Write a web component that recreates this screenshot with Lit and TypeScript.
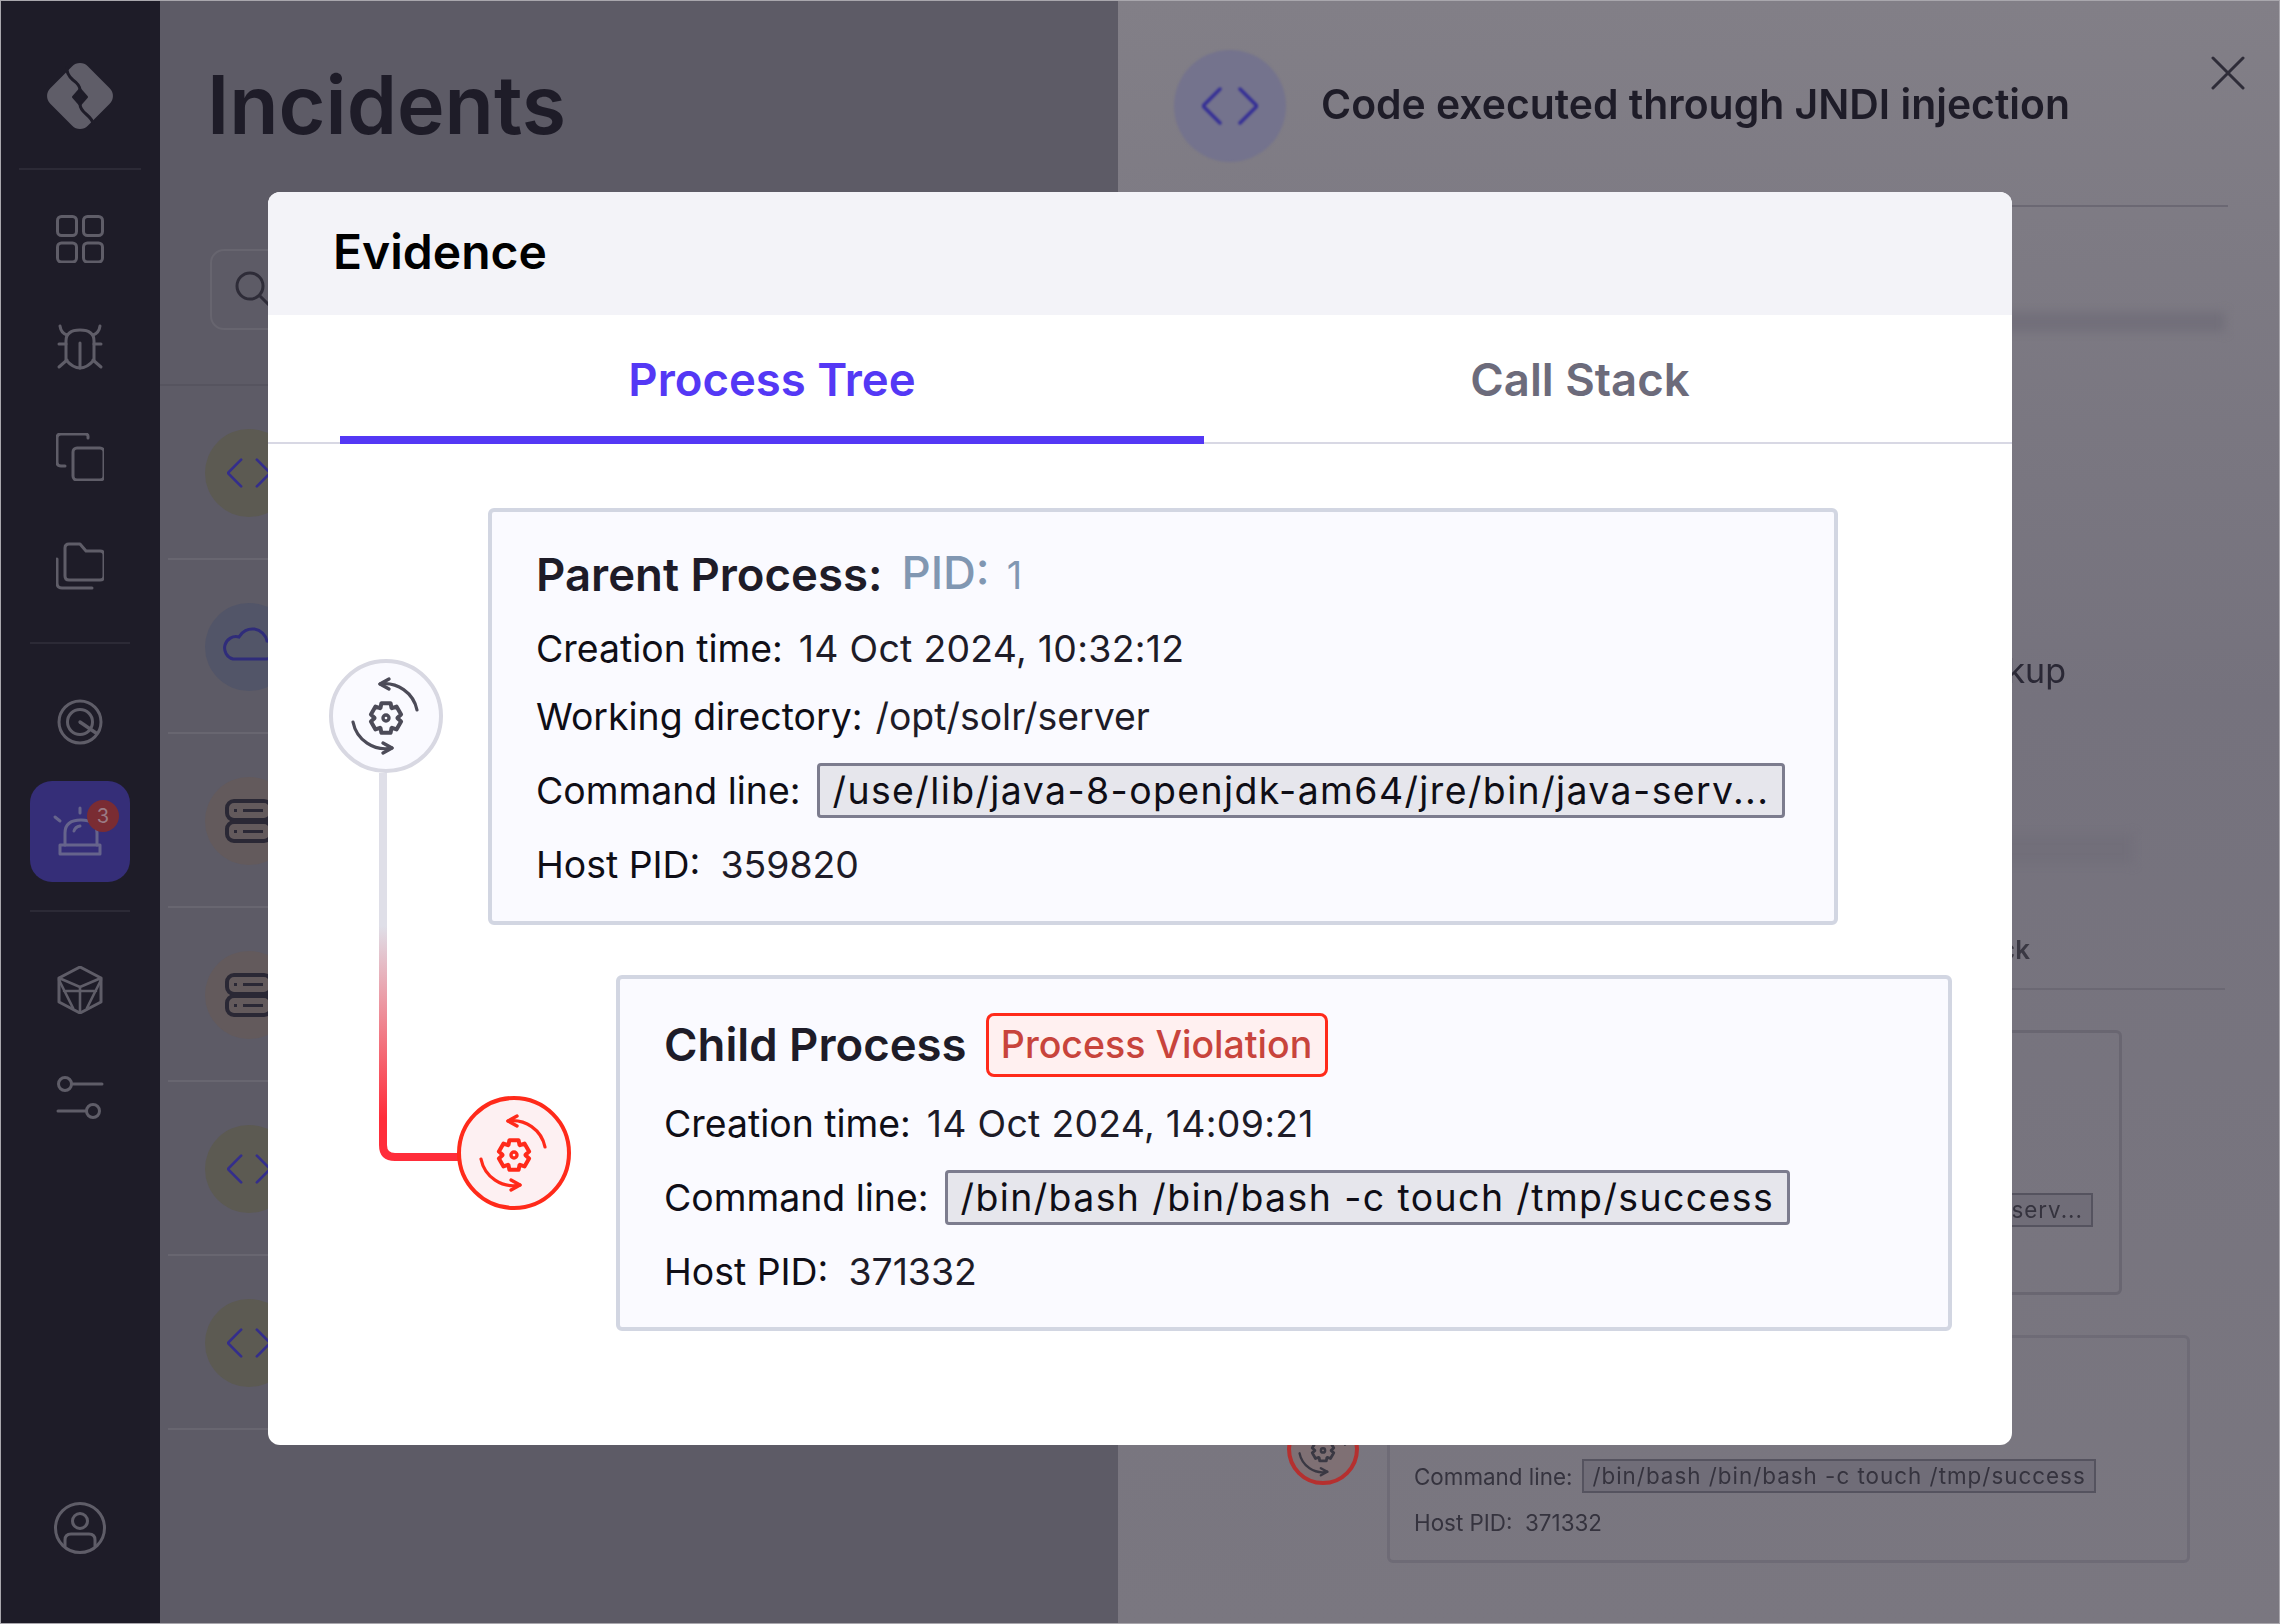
import { LitElement, html, svg, css } from "lit";
import { customElement } from "lit/decorators.js";

// six toothed gear outline, centred on 0,0
function gearPath(r: number, inner: number) {
  let d = "";
  for (let i = 0; i < 6; i++) {
    const a = (i * Math.PI) / 3 - Math.PI / 2;
    const pts = [
      [a - 0.3, r],
      [a + 0.3, r],
      [a + 0.5, inner],
      [a + Math.PI / 3 - 0.5, inner],
    ];
    for (const [t, q] of pts) {
      d += `${d ? "L" : "M"}${(Math.cos(t) * q).toFixed(1)} ${(Math.sin(t) * q).toFixed(1)}`;
    }
  }
  return d + "Z";
}

const processIcon = (size: number) => html`
  <svg width=${size} height=${size} viewBox="-45 -45 90 90" fill="none" stroke="currentColor" stroke-width="3.2" stroke-linecap="round" stroke-linejoin="round">
    <path d="M-6 -32 A33 33 0 0 1 31 -6"></path>
    <path d="M-6 -32 L3 -37 M-6 -32 L3 -27" stroke-width="3.4"></path>
    <path d="M-33 6 A33 33 0 0 0 6 32"></path>
    <path d="M6 32 L-3 37 M6 32 L-3 27" stroke-width="3.4"></path>
    <path d=${gearPath(15.5, 11.5)} transform="translate(0 2)" stroke-width="4"></path>
    <circle cx="0" cy="2" r="3" stroke-width="3.4"></circle>
  </svg>
`;

const codeIcon = (size: number) => html`
  <svg width=${size} height=${size} viewBox="0 0 56 56" fill="none" stroke="currentColor" stroke-width="3.4" stroke-linecap="round" stroke-linejoin="round">
    <path d="M18 11 L1 28 L18 45"></path>
    <path d="M38 11 L55 28 L38 45"></path>
  </svg>
`;

const serverIcon = html`
  <svg width="60" height="60" viewBox="0 0 60 60" fill="none" stroke="currentColor" stroke-width="4">
    <rect x="8" y="10" width="44" height="19" rx="7"></rect>
    <rect x="8" y="31" width="44" height="19" rx="7"></rect>
    <path d="M24 19.5H44M24 40.5H44M15 19.5H18M15 40.5H18" stroke-width="3"></path>
  </svg>
`;

const cloudIcon = html`
  <svg width="60" height="60" viewBox="0 0 60 60" fill="none" stroke="currentColor" stroke-width="3">
    <path d="M14 42 H46 A9 9 0 0 0 48 24 A15 15 0 0 0 20 20 A11 11 0 0 0 14 42Z"></path>
  </svg>
`;

const NAV_TOP = [
  svg`<rect x="1.5" y="1.5" width="19" height="19" rx="4"></rect><rect x="27.5" y="1.5" width="19" height="19" rx="4"></rect><rect x="1.5" y="28" width="19" height="19" rx="4"></rect><rect x="27.5" y="28" width="19" height="19" rx="4"></rect>`,
  svg`<path d="M10 17 Q10 6 24 6 Q38 6 38 17 V36 Q31 44 24 44 Q17 44 10 36Z"></path><path d="M24 19V44M3 20H10M38 20H45M4 2 Q5 9 11 11M44 2 Q43 9 37 11M3 43 L11 36M45 43 L37 36"></path>`,
  svg`<path d="M32 5 V3 Q32 1 29 1 H5 Q1 1 1 5 V29 Q1 33 5 33 H9"></path><rect x="17" y="15" width="31" height="32" rx="4"></rect>`,
  svg`<path d="M9 6 Q9 2 13 2 H24 L30 9 H44 Q48 9 48 13 V34 Q48 38 44 38 H13 Q9 38 9 34Z"></path><path d="M1 17 V41 Q1 46 6 46 H36"></path>`,
];

const NAV_BOTTOM = [
  svg`<path d="M3 12 L24 1 L45 12 V36 L24 47 L3 36Z"></path><path d="M3 12 L24 21 L45 12M24 21 V47M3 14 L17 42M45 14 L31 42M8 25 H40" stroke-width="2.6"></path>`,
  svg`<circle cx="9" cy="10" r="6.5"></circle><circle cx="37" cy="37" r="6.5"></circle><path d="M15.5 10 H46M2 37 H30.5"></path>`,
];

@customElement("side-bar")
export class SideBar extends LitElement {
  static styles = css`
    :host {
      display: flex;
      flex-direction: column;
      align-items: center;
      width: 160px;
      flex: none;
      padding: 60px 0 70px;
      box-sizing: border-box;
      background: #1e1c28;
      color: #5f5d68;
    }
    .rule {
      height: 2px;
      background: #2c2a36;
    }
    .rule.wide {
      width: 122px;
      margin-top: 36px;
    }
    .rule.mid {
      width: 100px;
      margin-top: 52px;
    }
    .rule.low {
      width: 100px;
      margin-top: 28px;
    }
    .group {
      display: flex;
      flex-direction: column;
      gap: 61px;
      margin-top: 45px;
    }
    .group.bottom {
      margin-top: 54px;
      gap: 60px;
    }
    svg.nav {
      display: block;
      fill: none;
      stroke: currentColor;
      stroke-width: 3;
      stroke-linecap: round;
      stroke-linejoin: round;
    }
    .target {
      margin-top: 54px;
    }
    .active {
      position: relative;
      display: flex;
      align-items: center;
      justify-content: center;
      width: 100px;
      height: 101px;
      margin-top: 35px;
      border-radius: 22px;
      background: #352e78;
      color: #66648c;
    }
    .badge {
      position: absolute;
      left: 57px;
      top: 19px;
      width: 32px;
      height: 32px;
      border-radius: 50%;
      background: #7a2c33;
      color: #9a7b85;
      font: 400 20px/32px Inter, sans-serif;
      text-align: center;
    }
    .user {
      margin-top: auto;
    }
  `;

  render() {
    return html`
      <svg width="68" height="72" viewBox="0 0 68 72">
        <rect x="7.5" y="9.5" width="53" height="53" rx="11" fill="#5f5d68" transform="rotate(45 34 36)"></rect>
        <path d="M21 7 Q20 14 27 20 Q34 25 34 30 M34 44 Q34 49 40 54 Q47 60 47 64" fill="none" stroke="#1e1c28" stroke-width="3"></path>
        <path d="M34 29 L41 37 L34 45 L27 37Z" fill="#1e1c28" stroke="#1e1c28" stroke-width="2" stroke-linejoin="round"></path>
      </svg>
      <div class="rule wide"></div>
      <div class="group">
        ${NAV_TOP.map((p) => html`<svg class="nav" width="48" height="48" viewBox="0 0 48 48">${p}</svg>`)}
      </div>
      <div class="rule mid"></div>
      <svg class="nav target" width="48" height="48" viewBox="0 0 48 48">
        <circle cx="24" cy="24" r="21"></circle>
        <circle cx="24" cy="24" r="12.5"></circle>
        <path d="M24 24 L40 35" stroke-width="3.4"></path>
      </svg>
      <div class="active">
        <svg class="nav" width="56" height="56" viewBox="0 0 56 56">
          <path d="M13 41 V29 Q13 16 29 16 Q45 16 45 29 V41"></path>
          <path d="M8 50 V41 H48 V50Z"></path>
          <path d="M22 27 Q23 23 28 22M28 4V9M3 13 L8 17"></path>
        </svg>
        <span class="badge">3</span>
      </div>
      <div class="rule low"></div>
      <div class="group bottom">
        ${NAV_BOTTOM.map((p) => html`<svg class="nav" width="48" height="48" viewBox="0 0 48 48">${p}</svg>`)}
      </div>
      <svg class="nav user" width="52" height="52" viewBox="0 0 52 52">
        <circle cx="26" cy="26" r="24.5"></circle>
        <circle cx="26" cy="19" r="7.5"></circle>
        <path d="M11 44 V38 Q11 32 17 32 H35 Q41 32 41 38 V44"></path>
      </svg>
    `;
  }
}

@customElement("incident-list")
export class IncidentList extends LitElement {
  static styles = css`
    :host {
      display: block;
      width: 958px;
      flex: none;
      background: #5d5b66;
      font-family: Inter, sans-serif;
      filter: blur(0.7px);
    }
    .top {
      height: 386px;
      box-sizing: border-box;
      padding: 50px 0 0 47px;
      border-bottom: 2px solid #56545f;
    }
    h1 {
      margin: 0;
      font-size: 80.6px;
      line-height: 110px;
      font-weight: 600;
      color: #1e1c28;
    }
    .search {
      display: flex;
      align-items: center;
      width: 500px;
      height: 81px;
      margin: 89px 0 0 3px;
      padding-left: 20px;
      box-sizing: border-box;
      border: 2px solid #67656f;
      border-radius: 14px;
      color: #2e2c38;
    }
    .row {
      display: flex;
      align-items: center;
      height: 174px;
      box-sizing: border-box;
      margin-left: 8px;
      padding: 2px 0 0 37px;
      border-bottom: 2px solid #686670;
    }
    .dot {
      display: flex;
      align-items: center;
      justify-content: center;
      width: 88px;
      height: 88px;
      border-radius: 50%;
    }
    .code {
      background: #5c5a52;
      color: #342e8c;
    }
    .cloud {
      background: #525568;
      color: #2f2c7a;
    }
    .server {
      background: #635a5c;
      color: #2a2835;
    }
  `;

  render() {
    const rows: [string, unknown][] = [
      ["code", codeIcon(44)],
      ["cloud", cloudIcon],
      ["server", serverIcon],
      ["server", serverIcon],
      ["code", codeIcon(44)],
      ["code", codeIcon(44)],
    ];
    return html`
      <div class="top">
        <h1>Incidents</h1>
        <div class="search">
          <svg width="44" height="44" viewBox="0 0 44 44" fill="none" stroke="currentColor" stroke-width="3">
            <circle cx="18" cy="18" r="13"></circle>
            <path d="M28 28 L40 40"></path>
          </svg>
        </div>
      </div>
      ${rows.map(([kind, icon]) => html`<div class="row"><div class="dot ${kind}">${icon}</div></div>`)}
    `;
  }
}

@customElement("incident-detail")
export class IncidentDetail extends LitElement {
  static styles = css`
    :host {
      display: flex;
      flex-direction: column;
      flex: 1;
      min-width: 0;
      background: linear-gradient(#827f87 0, #75727d 700px, #7a7780 100%);
      font-family: Inter, sans-serif;
      color: #2a2835;
      filter: blur(0.5px);
    }
    .head {
      display: flex;
      align-items: center;
      gap: 35px;
      height: 205px;
      box-sizing: border-box;
      padding-top: 6px;
      margin: 0 52px 0 56px;
    }
    .head .dot {
      display: flex;
      align-items: center;
      justify-content: center;
      width: 112px;
      height: 112px;
      border-radius: 50%;
      background: #74738d;
      color: #342e96;
      filter: blur(1px);
    }
    .head h2 {
      margin: 0 0 4px;
      font-size: 40.9px;
      font-weight: 600;
      color: #1e1c28;
    }
    .bar {
      height: 20px;
      margin: 105px 55px 0 0;
      background: #726f7a;
      filter: blur(5px);
    }
    .bar.two {
      height: 30px;
      margin: 141px 147px 0 0;
    }
    .head-rule {
      height: 2px;
      margin: 0 52px 0 56px;
      background: #6b6873;
    }
    .line {
      margin: 317px 214px 0 0;
      font-size: 34px;
      line-height: 44px;
      text-align: right;
    }
    .tab {
      margin: 66px 250px 0 0;
      font-size: 26px;
      line-height: 40px;
      font-weight: 600;
      text-align: right;
      color: #3a3843;
    }
    .rule {
      height: 2px;
      margin: 18px 55px 0 0;
      background: #6b6873;
    }
    .card-a {
      height: 265px;
      margin: 40px 158px 0 150px;
      padding: 160px 26px 0 0;
      box-sizing: border-box;
      display: flex;
      justify-content: flex-end;
      align-items: flex-start;
      border: 3px solid #696671;
      border-radius: 6px;
    }
    .lower {
      display: flex;
      align-items: center;
      gap: 28px;
      margin: 40px 90px 0 169px;
    }
    .ring {
      flex: none;
      display: flex;
      align-items: center;
      justify-content: center;
      width: 72px;
      height: 72px;
      box-sizing: border-box;
      border: 4px solid #b5302f;
      border-radius: 50%;
      background: #7f7074;
      color: #3a3843;
    }
    .card-b {
      flex: 1;
      height: 228px;
      padding: 121px 0 0 24px;
      box-sizing: border-box;
      border: 3px solid #6e6b76;
      border-radius: 6px;
      font-size: 22.4px;
      color: #35333e;
    }
    .cmd {
      display: flex;
      align-items: center;
      gap: 10px;
    }
    .box {
      display: inline-block;
      height: 34px;
      line-height: 30px;
      padding: 0 8px;
      box-sizing: border-box;
      border: 2px solid #55535f;
      background: #706d78;
      font-size: 22.4px;
      letter-spacing: 1px;
      color: #35333e;
      white-space: nowrap;
    }
    .host {
      margin-top: 16px;
    }
  `;

  render() {
    return html`
      <div class="head">
        <div class="dot">${codeIcon(56)}</div>
        <h2>Code executed through JNDI injection</h2>
      </div>
      <div class="head-rule"></div>
      <div class="bar"></div>
      <div class="line">Backup</div>
      <div class="bar two"></div>
      <div class="tab">Call Stack</div>
      <div class="rule"></div>
      <div class="card-a"><span class="box">/java-serv...</span></div>
      <div class="lower">
        <div class="ring">${processIcon(64)}</div>
        <div class="card-b">
          <div class="cmd">Command line: <span class="box">/bin/bash /bin/bash -c touch /tmp/success</span></div>
          <div class="host">Host PID:&nbsp; 371332</div>
        </div>
      </div>
    `;
  }
}

@customElement("evidence-modal")
export class EvidenceModal extends LitElement {
  static styles = css`
    :host {
      display: block;
      width: 1744px;
      height: 1253px;
      border-radius: 12px;
      overflow: hidden;
      background: #fff;
      font-family: Inter, sans-serif;
      color: #0f0e16;
    }
    header {
      display: flex;
      align-items: center;
      height: 123px;
      box-sizing: border-box;
      padding: 0 0 4px 65px;
      background: #f3f3f8;
      font-size: 48px;
      font-weight: 600;
      color: #000;
    }
    .tabs {
      display: flex;
      height: 129px;
      box-sizing: border-box;
      padding-left: 72px;
      border-bottom: 2px solid #d8d8e4;
      font-size: 45.5px;
      font-weight: 600;
    }
    .tab {
      display: flex;
      align-items: center;
      justify-content: center;
      box-sizing: border-box;
      height: 129px;
      color: #6c6b7b;
    }
    .tab.on {
      width: 864px;
      padding-top: 8px;
      color: #5438f5;
      border-bottom: 8px solid #5438f5;
    }
    .tab.off {
      width: 752px;
    }
    .tree {
      position: relative;
      display: flex;
      flex-direction: column;
      gap: 50px;
      padding-top: 64px;
    }
    .wire {
      position: absolute;
      left: 0;
      top: 0;
    }
    .row {
      position: relative;
      display: flex;
      align-items: center;
    }
    .row.parent {
      gap: 45px;
      margin: 0 174px 0 61px;
    }
    .row.child {
      gap: 45px;
      margin: 0 60px 0 189px;
    }
    .node {
      flex: none;
      display: flex;
      align-items: center;
      justify-content: center;
      width: 114px;
      height: 114px;
      box-sizing: border-box;
      border-radius: 50%;
      border: 4px solid #d8d8e2;
      background: #fafaff;
      color: #4c4b58;
    }
    .node.bad {
      border-color: #ff2a1a;
      background: #fdf0f2;
      color: #ff2a1a;
    }
    .card {
      flex: 1;
      display: flex;
      flex-direction: column;
      gap: 25px;
      padding: 34px 48px 34.5px 44px;
      border: 4px solid #d2d6e2;
      border-radius: 6px;
      background: #fafaff;
      font-size: 37.4px;
      line-height: 43px;
    }
    .title {
      display: flex;
      align-items: center;
      gap: 19px;
      height: 64px;
      font-size: 45.5px;
      font-weight: 600;
      color: #1e1c28;
    }
    .parent .title {
      height: 56px;
    }
    .pid {
      color: #8197b2;
      font-weight: 500;
    }
    .pid span {
      font-size: 38px;
      font-weight: 400;
      margin-left: 17px;
    }
    .violation {
      display: flex;
      align-items: center;
      justify-content: center;
      width: 342px;
      height: 64px;
      box-sizing: border-box;
      border: 3px solid #ff2a1a;
      border-radius: 8px;
      background: #fff0f0;
      color: #c8443c;
      font-size: 37.5px;
      font-weight: 500;
    }
    .field {
      display: flex;
      align-items: center;
      gap: 16px;
      white-space: nowrap;
    }
    .field.tight {
      gap: 13px;
    }
    .field.wide {
      gap: 20px;
    }
    .field b {
      font-weight: 400;
      color: #1e1c28;
    }
    .field b.date {
      letter-spacing: 0.28px;
    }
    .cmd {
      display: block;
      height: 55px;
      line-height: 49px;
      padding: 0 13px;
      box-sizing: border-box;
      border: 3px solid #7c7c8e;
      border-radius: 4px;
      background: #e6e6ec;
      letter-spacing: 1.42px;
    }
  `;

  private created(value: string) {
    return html`<div class="field">Creation time: <b class="date">${value}</b></div>`;
  }

  private hostPid(value: string) {
    return html`<div class="field wide">Host PID: <b>${value}</b></div>`;
  }

  private command(value: string) {
    return html`<div class="field">Command line: <span class="cmd">${value}</span></div>`;
  }

  render() {
    return html`
      <header>Evidence</header>
      <div class="tabs">
        <div class="tab on">Process Tree</div>
        <div class="tab off">Call Stack</div>
      </div>
      <div class="tree">
        <svg class="wire" width="300" height="760" fill="none">
          <defs>
            <linearGradient id="wire" gradientUnits="userSpaceOnUse" x1="0" y1="482" x2="0" y2="674">
              <stop offset="0" stop-color="#dfdfe8"></stop>
              <stop offset="1" stop-color="#ff2d3a"></stop>
            </linearGradient>
          </defs>
          <path d="M115 329 V701 Q115 713 127 713 H192" stroke="url(#wire)" stroke-width="8"></path>
        </svg>
        <div class="row parent">
          <div class="node">${processIcon(90)}</div>
          <div class="card">
            <div class="title">Parent Process: <span class="pid">PID:<span>1</span></span></div>
            ${this.created("14 Oct 2024, 10:32:12")}
            <div class="field tight">Working directory: <b>/opt/solr/server</b></div>
            ${this.command("/use/lib/java-8-openjdk-am64/jre/bin/java-serv...")}
            ${this.hostPid("359820")}
          </div>
        </div>
        <div class="row child">
          <div class="node bad">${processIcon(90)}</div>
          <div class="card">
            <div class="title">Child Process <span class="violation">Process Violation</span></div>
            ${this.created("14 Oct 2024, 14:09:21")}
            ${this.command("/bin/bash /bin/bash -c touch /tmp/success")}
            ${this.hostPid("371332")}
          </div>
        </div>
      </div>
    `;
  }
}

@customElement("app-root")
export class AppRoot extends LitElement {
  static styles = css`
    :host {
      position: relative;
      display: flex;
      width: 2280px;
      height: 1624px;
      overflow: hidden;
    }
    :host::after {
      content: "";
      position: absolute;
      inset: 0;
      border: 1px solid #a9a7ad;
      pointer-events: none;
    }
    .close {
      position: absolute;
      right: 35px;
      top: 56px;
      color: #2e2c38;
    }
    evidence-modal {
      position: absolute;
      left: 268px;
      top: 192px;
    }
  `;

  render() {
    return html`
      <side-bar></side-bar>
      <incident-list></incident-list>
      <incident-detail></incident-detail>
      <svg class="close" width="34" height="34" viewBox="0 0 34 34" fill="none" stroke="currentColor" stroke-width="3" stroke-linecap="round">
        <path d="M2 2 L32 32 M32 2 L2 32"></path>
      </svg>
      <evidence-modal></evidence-modal>
    `;
  }
}
